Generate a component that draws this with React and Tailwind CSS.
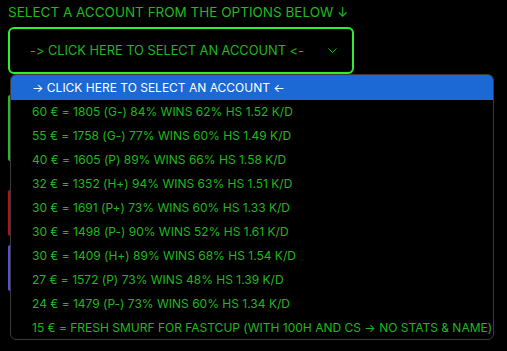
import React from "react";

const options = [
  "60 € = 1805 (G-) 84% WINS 62% HS 1.52 K/D",
  "55 € = 1758 (G-) 77% WINS 60% HS 1.49 K/D",
  "40 € = 1605 (P) 89% WINS 66% HS 1.58 K/D",
  "32 € = 1352 (H+) 94% WINS 63% HS 1.51 K/D",
  "30 € = 1691 (P+) 73% WINS 60% HS 1.33 K/D",
  "30 € = 1498 (P-) 90% WINS 52% HS 1.61 K/D",
  "30 € = 1409 (H+) 89% WINS 68% HS 1.54 K/D",
  "27 € = 1572 (P) 73% WINS 48% HS 1.39 K/D",
  "24 € = 1479 (P-) 73% WINS 60% HS 1.34 K/D",
  "15 € = FRESH SMURF FOR FASTCUP (WITH 100H AND CS → NO STATS & NAME)",
];

export default function App() {
  return (
    <div className="relative w-[507px] h-[351px] bg-black overflow-hidden font-['Inter',sans-serif] [font-feature-settings:'calt'_0]">
      <div className="px-2 pt-[3px] flex flex-col gap-[5px]">
        <div className="text-[13.5px] leading-[19px] text-[#1fb81f] whitespace-nowrap">
          SELECT A ACCOUNT FROM THE OPTIONS BELOW ↓
        </div>
        <div className="w-[346px] h-[47px] border-2 border-[#2ef02e] rounded-[6px] flex items-center pl-[20px] pr-[15px]">
          <span className="text-[12.8px] text-[#1fb81f] whitespace-nowrap">
            -&gt; CLICK HERE TO SELECT AN ACCOUNT &lt;-
          </span>
          <svg width="9" height="5" viewBox="0 0 9 5" className="ml-auto">
            <path d="M0.5 0.5 L4.5 4.5 L8.5 0.5" fill="none" stroke="#1fb81f" strokeWidth="1" />
          </svg>
        </div>
      </div>

      {/* underlying elements peeking out from beneath the open menu */}
      <div className="absolute left-[8px] top-[95px] w-[2px] h-[66px] bg-[#2ab82a] rounded-l" />
      <div className="absolute left-[8px] top-[190px] w-[2px] h-[46px] bg-[#b01515] rounded-l" />
      <div className="absolute left-[8px] top-[245px] w-[2px] h-[46px] bg-[#5a4fd6] rounded-l" />

      {/* open dropdown menu */}
      <div className="absolute left-[10px] top-[74px] w-[484px] h-[266px] bg-black border border-[#3a3a3a] rounded-[6px] overflow-hidden text-[12px] flex flex-col">
        <div className="h-[25px] shrink-0 bg-[#1c68d4] text-white pl-[21px] flex items-center whitespace-nowrap">
          → CLICK HERE TO SELECT AN ACCOUNT ←
        </div>
        {options.map((o, i) => (
          <div key={i} className="h-[24px] shrink-0 pl-[21px] text-[#1fb81f] whitespace-nowrap flex items-center">
            {o}
          </div>
        ))}
      </div>
    </div>
  );
}
